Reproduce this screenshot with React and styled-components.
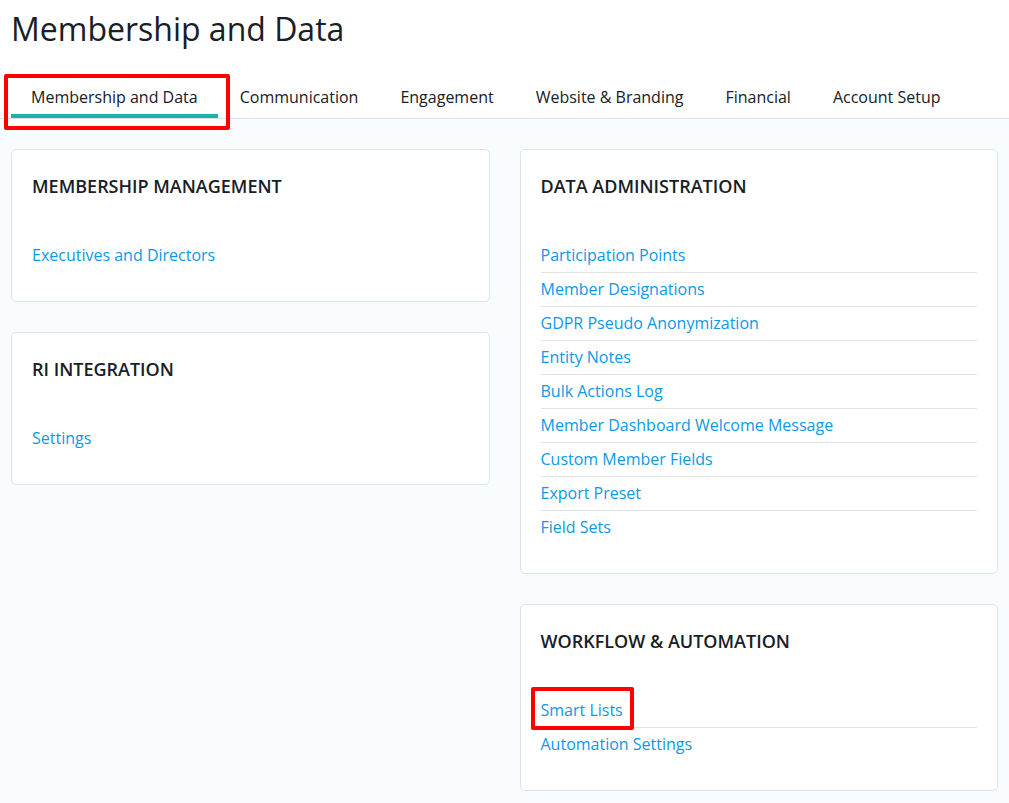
import React, { useState } from "react";
import styled, { createGlobalStyle } from "styled-components";

const tabs = [
  "Membership and Data",
  "Communication",
  "Engagement",
  "Website & Branding",
  "Financial",
  "Account Setup",
];

const columns = [
  [
    { title: "Membership Management", links: ["Executives and Directors"] },
    { title: "RI Integration", links: ["Settings"] },
  ],
  [
    {
      title: "Data Administration",
      links: [
        "Participation Points",
        "Member Designations",
        "GDPR Pseudo Anonymization",
        "Entity Notes",
        "Bulk Actions Log",
        "Member Dashboard Welcome Message",
        "Custom Member Fields",
        "Export Preset",
        "Field Sets",
      ],
    },
    { title: "Workflow & Automation", links: ["Smart Lists", "Automation Settings"] },
  ],
];

export default function App() {
  const [active, setActive] = useState(tabs[0]);

  return (
    <>
      <GlobalStyle />
      <Header>
        <PageTitle>Membership and Data</PageTitle>
        <TabBar>
          {tabs.map((tab) => (
            <TabItem key={tab}>
              <Tab $active={tab === active} onClick={() => setActive(tab)}>
                {tab}
              </Tab>
              {tab === "Membership and Data" && <TabMarker />}
            </TabItem>
          ))}
        </TabBar>
      </Header>
      <Content>
        {columns.map((cards, index) => (
          <Column key={index}>
            {cards.map(({ title, links }) => (
              <Card key={title}>
                <CardTitle>{title}</CardTitle>
                <LinkList>
                  {links.map((link) => (
                    <LinkRow key={link}>
                      <CardLink href="#">
                        {link}
                        {link === "Smart Lists" && <LinkMarker />}
                      </CardLink>
                    </LinkRow>
                  ))}
                </LinkList>
              </Card>
            ))}
          </Column>
        ))}
      </Content>
    </>
  );
}

const GlobalStyle = createGlobalStyle`
  * {
    box-sizing: border-box;
  }

  body {
    margin: 0;
    background: #f8fcff;
    color: #172026;
    font-family: "Open Sans", sans-serif;
    font-size: 16px;
  }
`;

const Header = styled.header`
  background: #ffffff;
  border-bottom: 1px solid #d9e5ee;
`;

const PageTitle = styled.h1`
  margin: 0;
  padding: 7px 11px 27px;
  font-size: 32px;
  font-weight: 400;
  line-height: 44px;
`;

const TabBar = styled.nav`
  display: flex;
  padding-left: 10px;
`;

const TabItem = styled.div`
  position: relative;
  padding: 0 1px;
`;

const Tab = styled.button`
  display: block;
  height: 40px;
  padding: 2px 20px 0;
  border: 0;
  border-bottom: 4px solid ${({ $active }) => ($active ? "#1bb2a9" : "transparent")};
  background: none;
  color: inherit;
  font: inherit;
  line-height: 34px;
  white-space: nowrap;
  cursor: pointer;
`;

const Marker = styled.span`
  position: absolute;
  border: 4px solid #ff0000;
  border-radius: 2px;
  pointer-events: none;
`;

const TabMarker = styled(Marker)`
  inset: -4px -11px -12px -6px;
`;

const LinkMarker = styled(Marker)`
  inset: -12px -11px -8px -10px;
`;

const Content = styled.main`
  display: grid;
  grid-template-columns: 1fr 1fr;
  gap: 30px;
  padding: 30px 11px 12px;
`;

const Column = styled.div`
  display: flex;
  flex-direction: column;
  gap: 30px;
`;

const Card = styled.section`
  padding: 24px 20px 28px;
  background: #ffffff;
  border: 1px solid #d9e5ee;
  border-radius: 5px;
`;

const CardTitle = styled.h2`
  margin: 0 0 41px;
  font-size: 18px;
  font-weight: 600;
  line-height: 24px;
  text-transform: uppercase;
`;

const LinkList = styled.ul`
  margin: 0;
  padding: 0;
  list-style: none;
`;

const LinkRow = styled.li`
  display: flex;
  height: 34px;
  align-items: center;
  border-bottom: 1px solid #e0e3e5;

  &:last-child {
    border-bottom-color: transparent;
  }
`;

const CardLink = styled.a`
  position: relative;
  color: #0d99e6;
  line-height: 23px;
  text-decoration: none;
`;
